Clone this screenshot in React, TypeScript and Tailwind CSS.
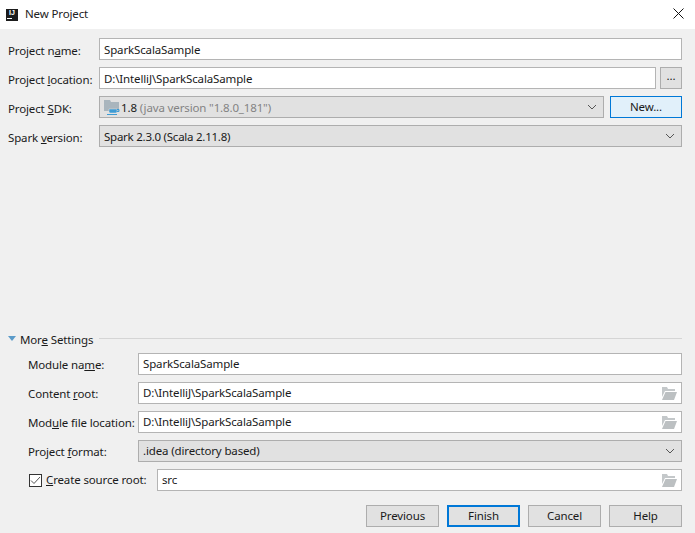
import type { ReactNode } from "react";

const font = "font-['Noto_Sans','Open_Sans',sans-serif]";

function Chevron() {
  return (
    <svg width="10" height="6" viewBox="0 0 10 6" className="shrink-0">
      <path d="M1 1l4 4 4-4" fill="none" stroke="#555" strokeWidth="1" />
    </svg>
  );
}

function FolderIcon() {
  return (
    <svg width="15" height="13" viewBox="0 0 15 13" className="shrink-0">
      <path d="M0 0h5l1 2h7v2H3L0 10z" fill="#c4c8ca" />
      <path d="M3.5 5H15l-3 8H0z" fill="#bcc0c2" />
    </svg>
  );
}

function SdkIcon() {
  return (
    <svg width="16" height="15" viewBox="0 0 16 15" className="shrink-0">
      <path d="M0 0h6l1 2h8v9H0z" fill="#a9b5bd" />
      <path d="M5 9h8v2.5a1.5 1.5 0 0 1-1.5 1.5h-5A1.5 1.5 0 0 1 5 11.5z" fill="#3d9bd4" stroke="#e1e1e1" strokeWidth="0.5" />
      <path d="M13 9.5h2v2h-2" fill="none" stroke="#3d9bd4" />
      <path d="M3 14h10v1H3z" fill="#3d9bd4" />
    </svg>
  );
}

function Input({ value, icon, textClass = "" }: { value: string; icon?: boolean; textClass?: string }) {
  return (
    <div className="flex h-[22px] min-w-0 flex-1 items-center justify-between border border-[#b4b4b4] bg-white pl-[4px] pr-[4px]">
      <span className={textClass}>{value}</span>
      {icon && <FolderIcon />}
    </div>
  );
}

function Combo({ children, disabled, textClass = "" }: { children: ReactNode; disabled?: boolean; textClass?: string }) {
  return (
    <div
      className={`flex h-[22px] min-w-0 flex-1 items-center justify-between border border-[#adadad] bg-[#e1e1e1] pl-[4px] pr-[6px] ${
        disabled ? "text-[#838383]" : ""
      }`}
    >
      <span className={`flex items-center gap-[1px] ${textClass}`}>{children}</span>
      <Chevron />
    </div>
  );
}

function Row({ label, width, labelClass, children }: { label: ReactNode; width: string; labelClass: string; children: ReactNode }) {
  return (
    <div className="flex items-center">
      <label className={`${width} ${labelClass} shrink-0 whitespace-nowrap`}>{label}</label>
      {children}
    </div>
  );
}

function Button({ children, primary }: { children: ReactNode; primary?: boolean }) {
  return (
    <button
      className={`h-[22px] w-[73px] bg-[#e1e1e1] ${
        primary ? "border-2 border-[#0078d7]" : "border border-[#adadad]"
      }`}
    >
      {children}
    </button>
  );
}

export default function App() {
  return (
    <div className={`flex h-[533px] w-[695px] flex-col overflow-hidden bg-[#f0f0f0] text-[11.5px] leading-none tracking-[-0.14px] text-[#1a1a1a] ${font}`}>
      {/* title bar */}
      <div className="flex h-[29px] shrink-0 items-center bg-white pl-[6px] pr-[11px]">
        <div className="flex h-[12px] w-[12px] flex-col items-center bg-[#1c1c1c] font-['Liberation_Sans',sans-serif] text-[7px] leading-[7px] font-bold tracking-normal text-white">
          IJ
          <div className="mt-[2px] ml-[1px] h-[1px] w-[5px] self-start bg-white" />
        </div>
        <span className="mt-[-2px] ml-[7px] text-[#222]">New Project</span>
        <svg width="11" height="11" viewBox="0 0 11 11" className="mt-[-2px] ml-auto">
          <path d="M.5.5l10 10M10.5.5l-10 10" stroke="#111" strokeWidth="1" />
        </svg>
      </div>

      <div className="flex flex-1 flex-col pt-[9px] pr-[13px] pb-[6px] pl-[8px]">
        <div className="flex flex-col gap-[7px]">
          <Row label={<>Project n<u>a</u>me:</>} width="w-[91px]" labelClass="pt-[3px]">
            <Input value="SparkScalaSample" textClass="pt-[1px]" />
          </Row>
          <Row label={<>Project <u>l</u>ocation:</>} width="w-[91px]" labelClass="pt-[3px]">
            <Input value="D:\IntelliJ\SparkScalaSample" textClass="pt-[1px]" />
            <button className="ml-[4px] h-[22px] w-[22px] border border-[#adadad] bg-[#e1e1e1] pb-[4px]">...</button>
          </Row>
          <Row label={<>Project <u>S</u>DK:</>} width="w-[91px]" labelClass="pt-[4px]">
            <Combo disabled>
              <SdkIcon />
              <span className="pt-[1px] text-[#1a1a1a]">1.8</span>
              <span className="ml-[2px] pt-[1px]">(java version "1.8.0_181")</span>
            </Combo>
            <button className="ml-[6px] h-[22px] w-[72px] border border-[#0078d7] bg-[#e1f0fa]">New...</button>
          </Row>
          <Row label={<>Spark <u>v</u>ersion:</>} width="w-[91px]" labelClass="pt-[4px]">
            <Combo textClass="pt-[2px] tracking-[-0.25px]">Spark 2.3.0 (Scala 2.11.8)</Combo>
          </Row>
        </div>

        {/* More Settings */}
        <div className="mt-auto flex items-center">
          <svg width="8" height="5" viewBox="0 0 8 5" className="shrink-0">
            <path d="M0 0h8L4 5z" fill="#5b9bc9" />
          </svg>
          <span className="ml-[4px] pt-[1px] whitespace-nowrap">Mor<u>e</u> Settings</span>
          <div className="ml-[6px] h-[1px] flex-1 bg-[#d5d5d5]" />
        </div>
        <div className="mt-[8px] flex flex-col gap-[7px] pl-[20px]">
          <Row label={<>Module na<u>m</u>e:</>} width="w-[110px]" labelClass="pt-[1px]">
            <Input value="SparkScalaSample" />
          </Row>
          <Row label={<>Content <u>r</u>oot:</>} width="w-[110px]" labelClass="pt-[1px]">
            <Input value="D:\IntelliJ\SparkScalaSample" icon />
          </Row>
          <Row label={<>Mod<u>u</u>le file location:</>} width="w-[110px]" labelClass="pt-[1px]">
            <Input value="D:\IntelliJ\SparkScalaSample" icon />
          </Row>
          <Row label={<>Project <u>f</u>ormat:</>} width="w-[110px]" labelClass="pt-[1px]">
            <Combo>.idea (directory based)</Combo>
          </Row>
          <div className="flex items-center">
            <div className="ml-[1px] flex h-[13px] w-[13px] shrink-0 items-center justify-center border border-[#333] bg-white">
              <svg width="11" height="9" viewBox="0 0 11 9">
                <path d="M1 4.5l3 3 6-6.5" fill="none" stroke="#555" strokeWidth="1" />
              </svg>
            </div>
            <label className="ml-[4px] w-[111px] shrink-0 whitespace-nowrap"><u>C</u>reate source root:</label>
            <Input value="src" icon />
          </div>
        </div>

        <div className="mt-[14px] flex justify-end gap-[8px]">
          <Button>Previous</Button>
          <Button primary>Finish</Button>
          <Button>Cancel</Button>
          <Button>Help</Button>
        </div>
      </div>
    </div>
  );
}
